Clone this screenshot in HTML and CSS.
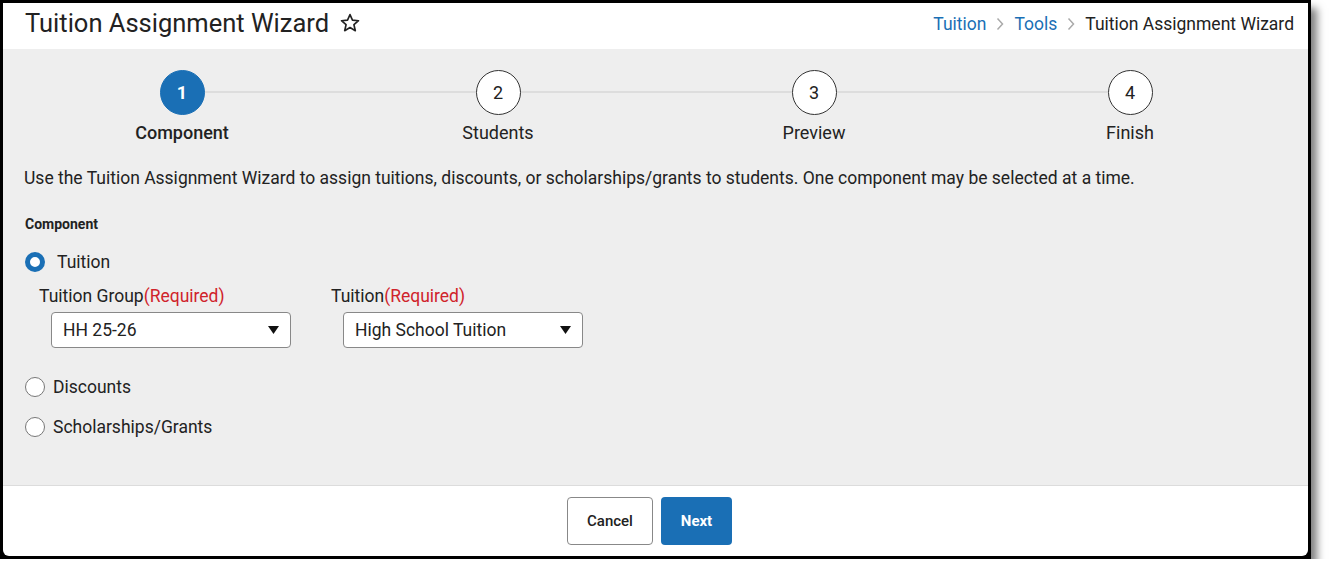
FILE: index.html
```html
<!DOCTYPE html>
<html lang="en">
<head>
    <meta charset="UTF-8">
    <title>Tuition Assignment Wizard</title>
    <link rel="stylesheet" href="styles.css">
</head>
<body>

<div class="frame">
    <div class="window">
        <div class="header">
            <h1 class="title">Tuition Assignment Wizard
                <svg class="star" width="22" height="22" viewBox="0 0 24 24"><path d="M12 2.8l2.7 6.1 6.6.6-5 4.4 1.5 6.5L12 17l-5.8 3.4 1.5-6.5-5-4.4 6.6-.6z" fill="none" stroke="#222" stroke-width="1.8" stroke-linejoin="round"/></svg>
            </h1>
            <div class="crumbs">
                <a href="#">Tuition</a>
                <svg class="chev" width="8" height="14" viewBox="0 0 8 14"><path d="M1.5 1.5l5 5.5-5 5.5" fill="none" stroke="#aaa" stroke-width="1.5"/></svg>
                <a href="#">Tools</a>
                <svg class="chev" width="8" height="14" viewBox="0 0 8 14"><path d="M1.5 1.5l5 5.5-5 5.5" fill="none" stroke="#aaa" stroke-width="1.5"/></svg>
                <span>Tuition Assignment Wizard</span>
            </div>
        </div>

        <div class="content">
            <div class="stepper">
                <div class="step active"><div class="circle">1</div><div class="step-label">Component</div></div>
                <div class="step"><div class="circle">2</div><div class="step-label">Students</div></div>
                <div class="step"><div class="circle">3</div><div class="step-label">Preview</div></div>
                <div class="step"><div class="circle">4</div><div class="step-label">Finish</div></div>
            </div>

            <p class="intro">Use the Tuition Assignment Wizard to assign tuitions, discounts, or scholarships/grants to students. One component may be selected at a time.</p>

            <div class="group-label">Component</div>

            <div class="radio-row checked">
                <span class="radio"></span>
                <span class="radio-text">Tuition</span>
            </div>

            <div class="fields">
                <div class="field">
                    <div class="field-label">Tuition Group<span class="req">(Required)</span></div>
                    <div class="select">
                        <span>HH 25-26</span>
                        <svg width="11" height="8" viewBox="0 0 11 8"><path d="M0 0h11L5.5 8z" fill="#111"/></svg>
                    </div>
                </div>
                <div class="field">
                    <div class="field-label">Tuition<span class="req">(Required)</span></div>
                    <div class="select">
                        <span>High School Tuition</span>
                        <svg width="11" height="8" viewBox="0 0 11 8"><path d="M0 0h11L5.5 8z" fill="#111"/></svg>
                    </div>
                </div>
            </div>

            <div class="radio-row">
                <span class="radio"></span>
                <span class="radio-text">Discounts</span>
            </div>
            <div class="radio-row">
                <span class="radio"></span>
                <span class="radio-text">Scholarships/Grants</span>
            </div>
        </div>

        <div class="footer">
            <button class="btn btn-cancel">Cancel</button>
            <button class="btn btn-next">Next</button>
        </div>
    </div>
</div>

</body>
</html>
```

FILE: styles.css
```css
body {
    margin: 0;
    background: #fff;
    font-family: Roboto, "Liberation Sans", Arial, sans-serif;
    color: #222;
}
.frame {
    width: 1305px;
    height: 553px;
    border: 3px solid #000;
    background: #000;
    box-shadow: 6px 8px 8px rgba(0, 0, 0, 0.5);
}
.window {
    height: 553px;
    background: #fff;
    border-radius: 0 0 6px 6px;
    overflow: hidden;
    display: flex;
    flex-direction: column;
}
.header {
    height: 40px;
    padding: 0 14px 6px 22px;
    display: flex;
    align-items: center;
    justify-content: space-between;
}
.title {
    margin: 0;
    font-size: 25.5px;
    font-weight: 400;
    display: flex;
    align-items: center;
    gap: 10px;
}
.crumbs {
    display: flex;
    align-items: center;
    gap: 10px;
    font-size: 17.5px;
    padding-top: 1px;
}
.crumbs a {
    color: #1a6fb5;
    text-decoration: none;
}
.content {
    flex: 1;
    background: #eeeeee;
    border-bottom: 1px solid #dcdcdc;
    padding: 21px 20px 0 21px;
}
.stepper {
    display: flex;
    position: relative;
}
.stepper::before {
    content: "";
    position: absolute;
    left: 158px;
    right: 158px;
    top: 21px;
    height: 2px;
    background: #dddddd;
}
.step {
    flex: 1;
    display: flex;
    flex-direction: column;
    align-items: center;
    position: relative;
}
.circle {
    width: 43px;
    height: 43px;
    border: 1px solid #333;
    border-radius: 50%;
    background: #fff;
    display: flex;
    align-items: center;
    justify-content: center;
    font-size: 18px;
}
.step.active .circle {
    background: #1a6fb5;
    border-color: #1a6fb5;
    color: #fff;
    font-weight: 700;
}
.step-label {
    margin-top: 7px;
    font-size: 18px;
}
.step.active .step-label {
    font-weight: 500;
}
.intro {
    margin: 24px 0 0 0;
    font-size: 17.5px;
    line-height: 22px;
}
.group-label {
    margin-top: 27px;
    margin-left: 1px;
    font-size: 14px;
    font-weight: 700;
}
.radio-row {
    display: flex;
    align-items: center;
    gap: 8px;
    margin-left: 1px;
    height: 22px;
    font-size: 17.5px;
}
.radio-row.checked {
    margin-top: 19px;
    gap: 12px;
}
.radio {
    width: 18px;
    height: 18px;
    border: 1px solid #777;
    border-radius: 50%;
    background: #fff;
}
.radio-row.checked .radio {
    width: 10px;
    height: 10px;
    border: 5px solid #1a6fb5;
}
.fields {
    display: flex;
    margin: 12px 0 0 15px;
}
.field {
    width: 292px;
}
.field-label {
    font-size: 17.5px;
    line-height: 22px;
}
.req {
    color: #d0232b;
}
.select {
    margin: 5px 0 0 12px;
    width: 216px;
    height: 34px;
    padding: 0 11px;
    border: 1px solid #888;
    border-radius: 4px;
    background: #fff;
    display: flex;
    align-items: center;
    justify-content: space-between;
    font-size: 17.5px;
}
.fields + .radio-row {
    margin-top: 28px;
}
.radio-row + .radio-row {
    margin-top: 18px;
}
.footer {
    height: 70px;
    display: flex;
    align-items: center;
    justify-content: center;
    gap: 8px;
    padding-right: 12px;
}
.btn {
    height: 48px;
    border-radius: 4px;
    font-family: Roboto, "Liberation Sans", Arial, sans-serif;
    font-size: 15px;
    cursor: pointer;
}
.btn-cancel {
    width: 86px;
    background: #fff;
    border: 1px solid #888;
    color: #222;
    font-weight: 500;
}
.btn-next {
    width: 71px;
    background: #1a6fb5;
    border: none;
    color: #fff;
    font-weight: 700;
}
```
